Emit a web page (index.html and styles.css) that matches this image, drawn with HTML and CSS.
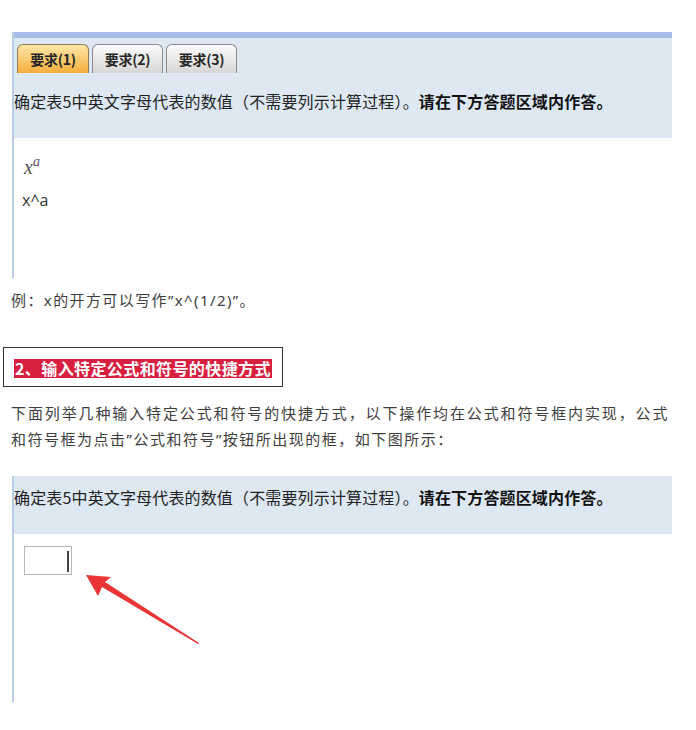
FILE: index.html
```html
<!DOCTYPE html>
<html lang="zh">
<head>
<meta charset="utf-8">
<link rel="stylesheet" href="styles.css">
</head>
<body>
<div class="page">
  <div class="shot shot1">
    <div class="topbar"></div>
    <div class="head">
      <div class="tabs">
        <div class="tab active">要求(1)</div>
        <div class="tab">要求(2)</div>
        <div class="tab">要求(3)</div>
      </div>
      <div class="q">确定表5中英文字母代表的数值（不需要列示计算过程）。<b>请在下方答题区域内作答。</b></div>
    </div>
    <div class="answer1">
      <div class="math"><i>x</i><sup>a</sup></div>
      <div class="plain">x^a</div>
    </div>
  </div>

  <p class="note">例：x的开方可以写作”x^(1/2)”。</p>

  <div class="headbox"><span class="hl">2、输入特定公式和符号的快捷方式</span></div>

  <p class="para">下面列举几种输入特定公式和符号的快捷方式，以下操作均在公式和符号框内实现，公式和符号框为点击”公式和符号”按钮所出现的框，如下图所示：</p>

  <div class="shot shot2">
    <div class="head2">
      <div class="q">确定表5中英文字母代表的数值（不需要列示计算过程）。<b>请在下方答题区域内作答。</b></div>
    </div>
    <div class="answer2">
      <div class="inputbox"><span class="cursor"></span></div>
      <svg class="arrow" width="130" height="80" viewBox="0 0 130 80">
        <polygon points="1,1 26,3 20,8 114,69 113,70 17,13 13,22" fill="#e93535"/>
      </svg>
    </div>
  </div>
</div>
</body>
</html>
```
FILE: styles.css
```css
html, body {
  margin: 0;
  padding: 0;
  background: #ffffff;
}
.page {
  width: 696px;
  padding-top: 32px;
  font-family: "Noto Sans", "Noto Sans CJK SC", sans-serif;
  color: #3b3b3b;
}
.shot {
  margin-left: 12px;
  width: 660px;
  border-left: 2px solid #b9cbe6;
  box-sizing: border-box;
}
.topbar {
  height: 6px;
  background: #a9bde9;
}
.head {
  background: #dde8f3;
  height: 100px;
  box-sizing: border-box;
  padding-top: 6px;
}
.tabs {
  display: flex;
  gap: 3px;
  padding-left: 3px;
}
.tab {
  width: 71px;
  height: 29px;
  box-sizing: border-box;
  border: 1px solid #8c8c8c;
  border-bottom: none;
  border-radius: 6px 6px 0 0;
  background: linear-gradient(#fbfbfb, #d6d6d6);
  font-family: "Noto Sans CJK SC", sans-serif;
  font-weight: bold;
  font-size: 14px;
  color: #262626;
  display: flex;
  align-items: center;
  justify-content: center;
  letter-spacing: -0.3px;
}
.tab.active {
  width: 72px;
  border-color: #8f7d55;
  background: linear-gradient(#fde8a8, #f6ad3a);
}
.q {
  font-family: "Noto Sans CJK SC", sans-serif;
  font-size: 16px;
  color: #222;
  letter-spacing: 0.15px;
  margin-top: 17px;
  padding-left: 0;
  white-space: nowrap;
  line-height: 22px;
}
.q b {
  font-weight: bold;
  color: #111;
}
.answer1 {
  height: 140px;
  background: #fff;
  padding-left: 8px;
  padding-top: 12px;
  box-sizing: border-box;
}
.math {
  font-family: "Liberation Serif", serif;
  font-size: 20px;
  color: #555;
  line-height: 24px;
  padding-left: 2px;
}
.math sup {
  font-size: 14px;
  font-style: italic;
  vertical-align: 8px;
}
.plain {
  font-family: "Open Sans", "Noto Sans", sans-serif;
  font-size: 16px;
  color: #333;
  margin-top: 10px;
  line-height: 22px;
}
.note {
  margin: 12px 0 0 11px;
  font-size: 15px;
  line-height: 20px;
  color: #3e3e3e;
  letter-spacing: 1.4px;
}
.headbox {
  margin: 37px 0 0 3px;
  width: 280px;
  height: 40px;
  box-sizing: border-box;
  border: 1px solid #333;
  padding: 10px 0 0 10px;
}
.hl {
  display: inline-block;
  font-family: "Noto Sans CJK SC", sans-serif;
  background: #d81f3f;
  color: #fff;
  font-weight: bold;
  font-size: 16px;
  line-height: 19px;
  padding: 0 1px;
  letter-spacing: 0.4px;
}
.para {
  margin: 13px 0 0 11px;
  width: 658px;
  font-size: 15px;
  line-height: 26px;
  letter-spacing: 1.5px;
  text-align: justify;
  color: #3e3e3e;
}
.shot2 {
  margin-top: 24px;
}
.head2 {
  background: #dde8f3;
  height: 58px;
  box-sizing: border-box;
  padding-top: 10px;
}
.head2 .q {
  margin-top: 0;
}
.answer2 {
  position: relative;
  height: 168px;
  padding: 12px 0 0 10px;
  box-sizing: border-box;
}
.inputbox {
  width: 48px;
  height: 29px;
  box-sizing: border-box;
  border: 1px solid #b8b8b8;
  position: relative;
  background: #fff;
}
.cursor {
  position: absolute;
  right: 2px;
  top: 4px;
  width: 2px;
  height: 21px;
  background: #444;
}
.arrow {
  position: absolute;
  left: 71px;
  top: 40px;
}
```
